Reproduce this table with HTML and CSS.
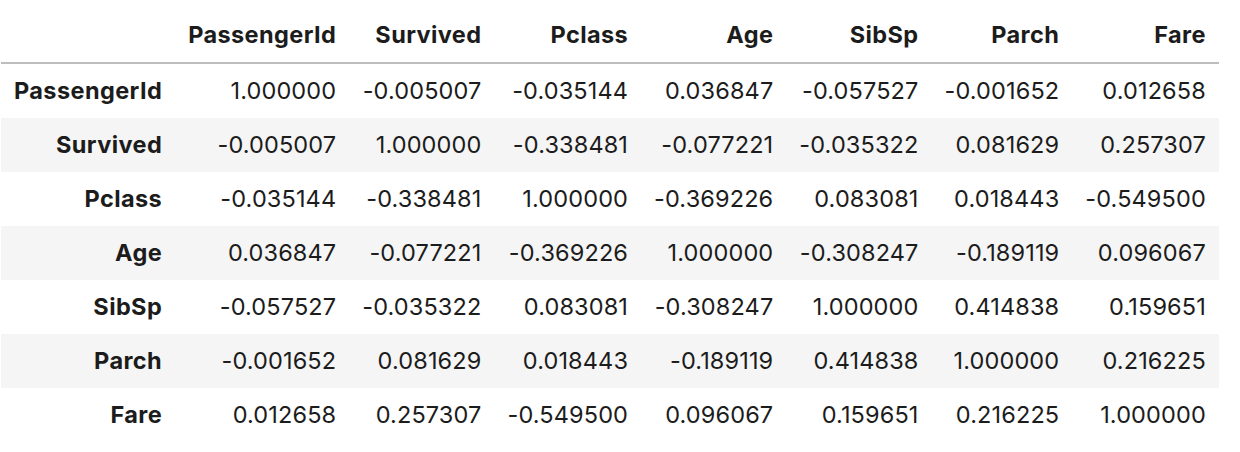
FILE: index.html
```html
<!DOCTYPE html>
<html>
<head>
<meta charset="utf-8">
<link rel="stylesheet" href="styles.css">
</head>
<body>
<div class="wrap">
<table class="dataframe">
  <thead>
    <tr><th></th><th>PassengerId</th><th>Survived</th><th>Pclass</th><th>Age</th><th>SibSp</th><th>Parch</th><th>Fare</th></tr>
  </thead>
  <tbody>
    <tr><th>PassengerId</th><td>1.000000</td><td>-0.005007</td><td>-0.035144</td><td>0.036847</td><td>-0.057527</td><td>-0.001652</td><td>0.012658</td></tr>
    <tr><th>Survived</th><td>-0.005007</td><td>1.000000</td><td>-0.338481</td><td>-0.077221</td><td>-0.035322</td><td>0.081629</td><td>0.257307</td></tr>
    <tr><th>Pclass</th><td>-0.035144</td><td>-0.338481</td><td>1.000000</td><td>-0.369226</td><td>0.083081</td><td>0.018443</td><td>-0.549500</td></tr>
    <tr><th>Age</th><td>0.036847</td><td>-0.077221</td><td>-0.369226</td><td>1.000000</td><td>-0.308247</td><td>-0.189119</td><td>0.096067</td></tr>
    <tr><th>SibSp</th><td>-0.057527</td><td>-0.035322</td><td>0.083081</td><td>-0.308247</td><td>1.000000</td><td>0.414838</td><td>0.159651</td></tr>
    <tr><th>Parch</th><td>-0.001652</td><td>0.081629</td><td>0.018443</td><td>-0.189119</td><td>0.414838</td><td>1.000000</td><td>0.216225</td></tr>
    <tr><th>Fare</th><td>0.012658</td><td>0.257307</td><td>-0.549500</td><td>0.096067</td><td>0.159651</td><td>0.216225</td><td>1.000000</td></tr>
  </tbody>
</table>
</div>
</body>
</html>
```

FILE: styles.css
```css
html, body {
  margin: 0;
  padding: 0;
  background: #ffffff;
}
.wrap {
  padding: 8px 0 0 1px;
}
.dataframe {
  border-collapse: collapse;
  border-spacing: 0;
  font-family: Inter, "Liberation Sans", sans-serif;
  font-size: 23.5px;
  color: #1c1c1c;
}
.dataframe th,
.dataframe td {
  text-align: right;
  padding: 13px 13px;
  line-height: 28px;
  white-space: nowrap;
  vertical-align: middle;
}
.dataframe td {
  letter-spacing: 0.13px;
}
.dataframe th {
  font-weight: 700;
  letter-spacing: 0.4px;
}
.dataframe thead tr {
  border-bottom: 2px solid #bdbdbd;
}
.dataframe tbody tr:nth-child(even) {
  background: #f5f5f5;
}
```
